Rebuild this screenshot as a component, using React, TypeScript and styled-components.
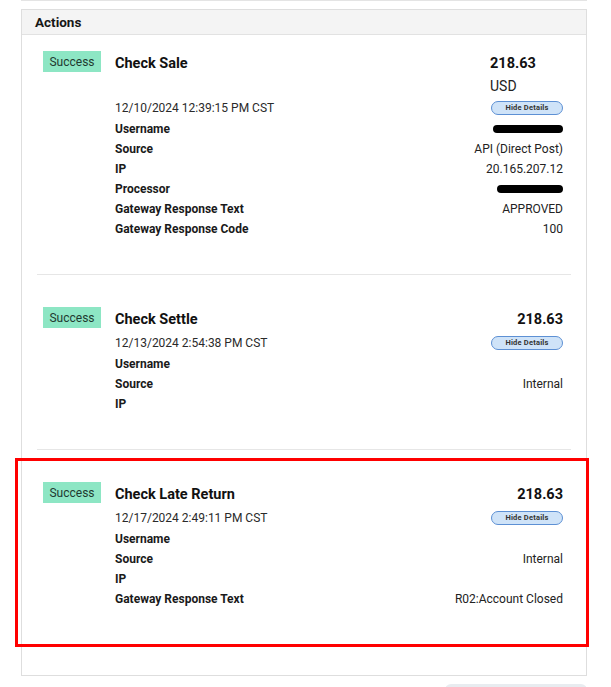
import React from "react";
import styled, { createGlobalStyle } from "styled-components";

const Global = createGlobalStyle`
  html, body { margin: 0; padding: 0; background: #ffffff; }
  body { font-family: Roboto, "Liberation Sans", Arial, sans-serif; color: #1b1b1b; }
  * { box-sizing: border-box; }
`;

const Page = styled.div`
  width: 611px;
  height: 687px;
  overflow: hidden;
  padding: 0 24px 0 21px;
  display: flex;
  flex-direction: column;
`;

const PrevCardEdge = styled.div`
  height: 2px;
  border-bottom: 1px solid #e4e4e4;
  margin-bottom: 8px;
`;

const Card = styled.section`
  border: 1px solid #dedede;
  background: #fff;
`;

const CardHeader = styled.div`
  height: 25px;
  background: #f4f4f4;
  border-bottom: 1px solid #e2e2e2;
  padding-left: 13px;
  display: flex;
  align-items: center;
  font-size: 13.5px;
  font-weight: 700;
  color: #161616;
`;

const CardBody = styled.div`
  padding: 17px 0 66px;
`;

const Item = styled.div`
  display: flex;
  align-items: flex-start;
  padding: 0 23px 0 21px;
`;

const Highlight = styled.div`
  position: relative;
  &::after {
    content: "";
    position: absolute;
    left: -7px;
    right: -3px;
    top: -25px;
    bottom: -38px;
    border: 3px solid #ff0000;
    pointer-events: none;
  }
`;

const Badge = styled.span`
  flex: none;
  width: 58px;
  height: 21px;
  margin-top: -1px;
  background: #8de6c4;
  color: #1f3a30;
  font-size: 12px;
  display: flex;
  align-items: center;
  justify-content: center;
  margin-right: 14px;
`;

const Main = styled.div`
  flex: 1;
  display: flex;
  flex-direction: column;
`;

const Line = styled.div<{ $h: number }>`
  display: flex;
  justify-content: space-between;
  align-items: flex-start;
  min-height: ${(p) => p.$h}px;
`;

const Title = styled.div`
  font-size: 14.5px;
  font-weight: 700;
  line-height: 24px;
  color: #111;
`;

const AmountCol = styled.div<{ $stacked: boolean }>`
  display: flex;
  flex-direction: column;
  align-items: ${(p) => (p.$stacked ? "flex-start" : "flex-end")};
  width: ${(p) => (p.$stacked ? "73px" : "auto")};
`;

const Amount = styled.div`
  font-size: 14.5px;
  font-weight: 700;
  line-height: 24px;
  color: #111;
`;

const Currency = styled.div`
  font-size: 14px;
  line-height: 21px;
  color: #222;
`;

const DateText = styled.div`
  font-size: 12px;
  line-height: 22px;
  color: #2a2a2a;
`;

const PillButton = styled.button`
  margin-top: 4px;
  width: 72px;
  height: 14px;
  padding: 0;
  border-radius: 8px;
  border: 1px solid #5d90d4;
  background: #cfe3f8;
  color: #333;
  font-family: Roboto, "Liberation Sans", Arial, sans-serif;
  font-size: 7.5px;
  font-weight: 700;
  letter-spacing: 0.2px;
  line-height: 12px;
`;

const Label = styled.div`
  font-size: 12px;
  font-weight: 700;
  line-height: 20px;
  color: #1a1a1a;
`;

const Value = styled.div`
  font-size: 12px;
  line-height: 20px;
  color: #222;
`;

const Redacted = styled.span<{ $w: number }>`
  display: inline-block;
  width: ${(p) => p.$w}px;
  height: 8px;
  margin-top: 6px;
  background: #000;
  border-radius: 4px;
`;

const Divider = styled.hr`
  border: 0;
  border-top: 1px solid #e6e6e6;
  margin: 35px 15px 33px;
`;

const Footer = styled.div`
  display: flex;
  justify-content: flex-end;
  margin-top: 8px;
`;

const FooterButton = styled.div`
  width: 142px;
  height: 30px;
  background: #e8ecf0;
  border-radius: 6px;
`;

type Row = { label: string; value?: string; redacted?: number };

type Action = {
  title: string;
  date: string;
  amount: string;
  currency?: string;
  rows: Row[];
};

const actions: Action[] = [
  {
    title: "Check Sale",
    date: "12/10/2024 12:39:15 PM CST",
    amount: "218.63",
    currency: "USD",
    rows: [
      { label: "Username", redacted: 70 },
      { label: "Source", value: "API (Direct Post)" },
      { label: "IP", value: "20.165.207.12" },
      { label: "Processor", redacted: 66 },
      { label: "Gateway Response Text", value: "APPROVED" },
      { label: "Gateway Response Code", value: "100" },
    ],
  },
  {
    title: "Check Settle",
    date: "12/13/2024 2:54:38 PM CST",
    amount: "218.63",
    rows: [
      { label: "Username" },
      { label: "Source", value: "Internal" },
      { label: "IP" },
    ],
  },
  {
    title: "Check Late Return",
    date: "12/17/2024 2:49:11 PM CST",
    amount: "218.63",
    rows: [
      { label: "Username" },
      { label: "Source", value: "Internal" },
      { label: "IP" },
      { label: "Gateway Response Text", value: "R02:Account Closed" },
    ],
  },
];

function ActionItem({ a }: { a: Action }) {
  return (
    <Item>
      <Badge>Success</Badge>
      <Main>
        <Line $h={24}>
          <Title>{a.title}</Title>
          <AmountCol $stacked={!!a.currency}>
            <Amount>{a.amount}</Amount>
            {a.currency && <Currency>{a.currency}</Currency>}
          </AmountCol>
        </Line>
        <Line $h={22}>
          <DateText>{a.date}</DateText>
          <PillButton>Hide Details</PillButton>
        </Line>
        {a.rows.map((r) => (
          <Line $h={20} key={r.label}>
            <Label>{r.label}</Label>
            {r.redacted ? (
              <Redacted $w={r.redacted} />
            ) : (
              <Value>{r.value ?? ""}</Value>
            )}
          </Line>
        ))}
      </Main>
    </Item>
  );
}

export default function App() {
  return (
    <>
      <Global />
      <Page>
        <PrevCardEdge />
        <Card>
          <CardHeader>Actions</CardHeader>
          <CardBody>
            <ActionItem a={actions[0]} />
            <Divider />
            <ActionItem a={actions[1]} />
            <Divider />
            <Highlight>
              <ActionItem a={actions[2]} />
            </Highlight>
          </CardBody>
        </Card>
        <Footer>
          <FooterButton />
        </Footer>
      </Page>
    </>
  );
}
